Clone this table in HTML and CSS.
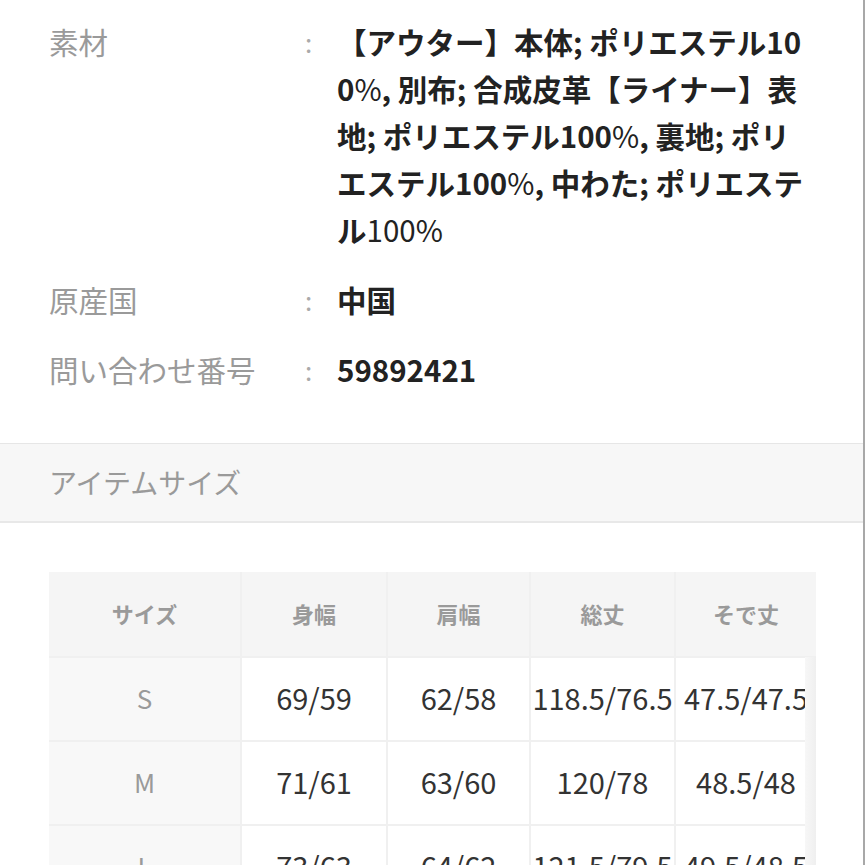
FILE: index.html
```html
<!DOCTYPE html>
<html lang="ja">
<head>
<meta charset="utf-8">
<link rel="stylesheet" href="styles.css">
</head>
<body>
<div class="page">
  <dl class="specs">
    <div class="spec">
      <dt class="spec-label">素材</dt>
      <dd class="spec-colon">:</dd>
      <dd class="spec-value">【アウター】本体; ポリエステル100<span class="thin">%</span>, 別布; 合成皮革【ライナー】表地; ポリエステル100<span class="thin">%</span>, 裏地; ポリエステル100<span class="thin">%</span>, 中わた; ポリエステル<span class="thin">100%</span></dd>
    </div>
    <div class="spec">
      <dt class="spec-label">原産国</dt>
      <dd class="spec-colon">:</dd>
      <dd class="spec-value">中国</dd>
    </div>
    <div class="spec">
      <dt class="spec-label">問い合わせ番号</dt>
      <dd class="spec-colon">:</dd>
      <dd class="spec-value">59892421</dd>
    </div>
  </dl>

  <div class="band">アイテムサイズ</div>

  <div class="size-wrap">
    <table class="size-table">
      <thead>
        <tr>
          <th class="c1">サイズ</th>
          <th class="c2">身幅</th>
          <th class="c3">肩幅</th>
          <th class="c4">総丈</th>
          <th class="c5">そで丈</th>
        </tr>
      </thead>
      <tbody>
        <tr><td class="size">S</td><td>69/59</td><td>62/58</td><td>118.5/76.5</td><td>47.5/47.5</td></tr>
        <tr><td class="size">M</td><td>71/61</td><td>63/60</td><td>120/78</td><td>48.5/48</td></tr>
        <tr><td class="size">L</td><td>73/63</td><td>64/62</td><td>121.5/79.5</td><td>49.5/48.5</td></tr>
      </tbody>
    </table>
    <div class="scroll-shade"></div>
  </div>
</div>
</body>
</html>
```

FILE: styles.css
```css
* { box-sizing: border-box; }

html, body {
  margin: 0;
  padding: 0;
  background: #fff;
}

body {
  font-family: "Noto Sans CJK JP", "Noto Sans", sans-serif;
  color: #222;
}

.page {
  width: 865px;
  min-height: 1000px;
  border-right: 2px solid #a8a8a8;
  padding-top: 18px;
}

.specs {
  margin: 0;
  padding: 0 0 50px 49px;
  display: flex;
  flex-direction: column;
  gap: 23px;
}

.spec {
  display: flex;
  align-items: flex-start;
}

.spec-label {
  width: 258px;
  flex: none;
  font-size: 29.5px;
  line-height: 47px;
  color: #9a9a9a;
  font-weight: 400;
}

.spec-colon {
  margin: 0;
  width: 30px;
  flex: none;
  font-size: 26px;
  line-height: 47px;
  color: #aaa;
  text-indent: -2px;
}

.spec-value {
  margin: 0;
  width: 474px;
  font-size: 29.5px;
  line-height: 47px;
  font-weight: 700;
  color: #222;
  word-break: break-all;
}

.thin { font-weight: 400; }

.band {
  height: 80px;
  background: #f7f7f7;
  border-top: 1px solid #e6e6e6;
  border-bottom: 2px solid #e8e8e8;
  padding-left: 49px;
  font-size: 28px;
  line-height: 77px;
  color: #9a9a9a;
}

.size-wrap {
  position: relative;
  margin: 49px 0 0 49px;
  width: 767px;
}

.size-table {
  border-collapse: collapse;
  table-layout: fixed;
  width: 767px;
}

.size-table th,
.size-table td {
  text-align: center;
  padding: 0;
  border: 2px solid #f0f0f0;
  white-space: nowrap;
  overflow: visible;
}

.size-table tr > :first-child { border-left: none; }
.size-table tr > :last-child { border-right: none; }
.size-table thead th { border-top: none; }

.size-table th {
  height: 85px;
  background: #f5f5f5;
  font-size: 22px;
  font-weight: 700;
  color: #9a9a9a;
  padding-bottom: 3px;
}

.size-table td {
  height: 84px;
  font-size: 29px;
  color: #333;
  background: #fff;
  padding-bottom: 4px;
}

.size-table td.size {
  background: #f8f8f8;
  color: #9a9a9a;
  font-size: 26px;
}

.c1 { width: 192px; }
.c2 { width: 146px; }
.c3 { width: 143px; }
.c4 { width: 145px; }
.c5 { width: 141px; }

.scroll-shade {
  position: absolute;
  top: 85px;
  right: 0;
  bottom: 0;
  width: 11px;
  background: linear-gradient(to right, #f7f7f7, #efefef);
}
```
